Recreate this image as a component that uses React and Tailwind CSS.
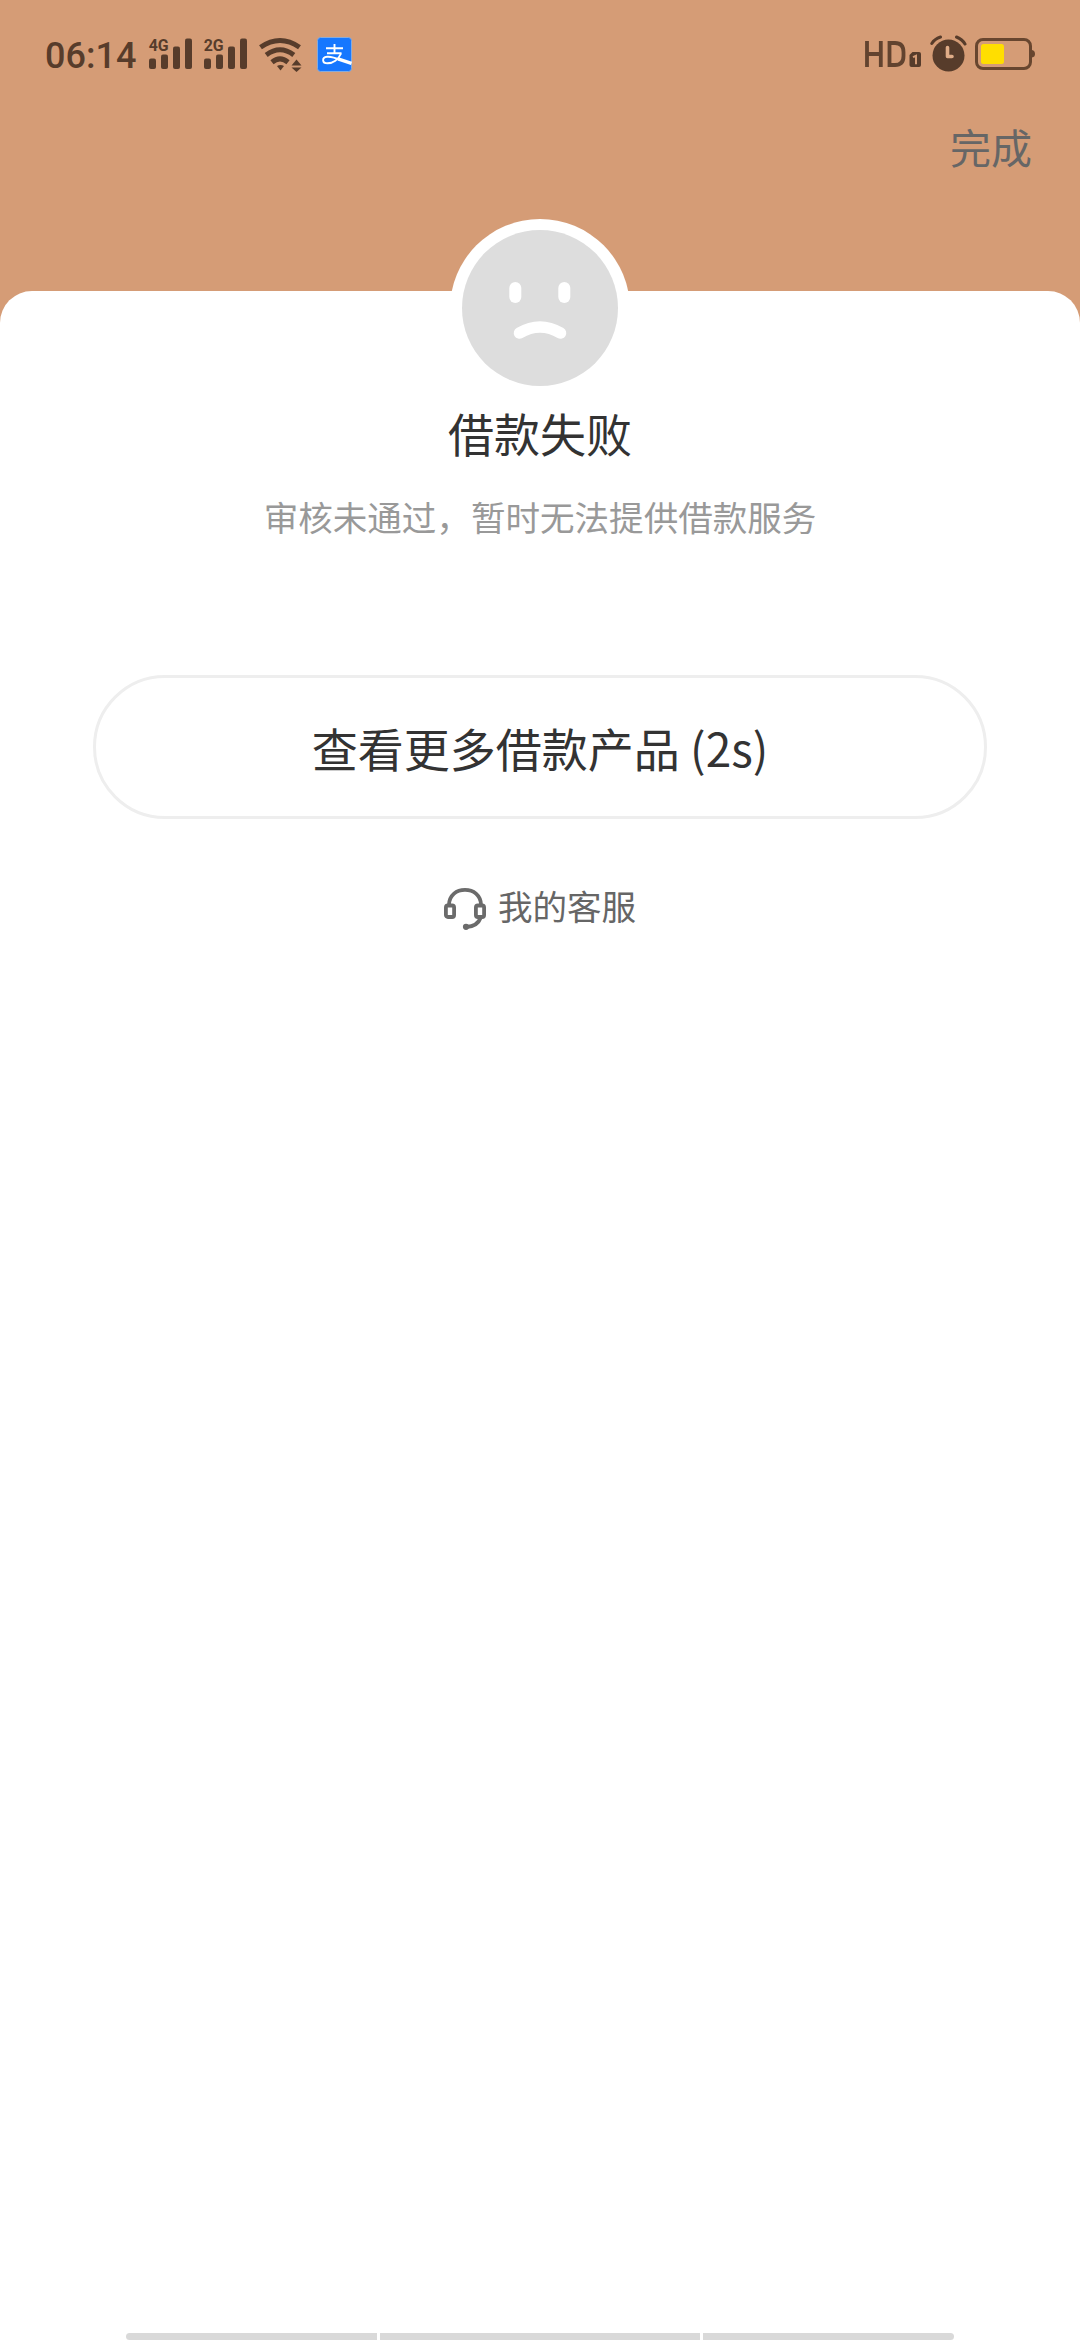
import React, { useState } from 'react';

const SignalIcon = ({ label }) => (
  <svg width="45" height="40" viewBox="-2 -4 45 40" fill="#573c2b">
    <text
      x="-0.3"
      y="12.8"
      fontSize="16.5"
      fontWeight="700"
      textLength="20"
      lengthAdjust="spacingAndGlyphs"
      className="font-['Roboto',sans-serif]"
    >
      {label}
    </text>
    <rect x="0" y="20.5" width="7" height="10.5" rx="2" />
    <rect x="12" y="16.5" width="7" height="14.5" rx="2" />
    <rect x="24" y="8.5" width="7" height="22.5" rx="2" />
    <rect x="36" y="0.5" width="7" height="30.5" rx="2" />
  </svg>
);

const WifiIcon = () => (
  <svg width="43" height="34" viewBox="0 0 43 34" fill="none">
    <g stroke="#573c2b" strokeWidth="5">
      <path d="M1.5 9.3Q21 -4.2 40.5 9.3" />
      <path d="M7.2 17Q21 6.6 34.8 17" />
      <path d="M13 24.2Q21 17.6 29 24.2" />
    </g>
    <g fill="#573c2b">
      <path d="M18 28Q21.5 26 25 28L21.5 32.5Z" />
      <path d="M37.5 21.5L42.5 27.5H32.5Z" />
      <path d="M32.5 29.5H42.5L37.5 34Z" />
    </g>
  </svg>
);

const AlipayIcon = () => (
  <svg width="35" height="35" viewBox="0 0 35 35" fill="none">
    <rect x="0.5" y="0.5" width="34" height="34" rx="3" fill="#1677ff" stroke="#86abdc" />
    <g stroke="#fff">
      <path d="M9 11.3H26M17.5 7V16.5M10 16.3H24.5" strokeWidth="1.9" />
      <path d="M24 16.5C21.5 22.5 16 26.3 10.5 26.3C5 26.3 4.5 20.5 10 19.8C14.5 19.2 20 21.5 24 23.2" strokeWidth="1.9" />
      <path d="M21 21.8L34.5 26.3" strokeWidth="3.4" />
    </g>
  </svg>
);

const HdIcon = () => (
  <svg width="57" height="36" viewBox="0 0 57 36" fill="none">
    <g stroke="#62432f" strokeWidth="3.8">
      <path d="M2 5V31M15.8 5V31M2 18H15.8" />
      <path d="M24.5 7H30Q38.5 7 38.5 16V20Q38.5 29 30 29H24.5Z" />
    </g>
    <path d="M47.5 16H54Q56 16 56 18V29Q56 31 54 31H46.5Q44.5 31 44.5 29V19Z" fill="#573c2b" />
    <path d="M48 21.2L51 19.8V28.2" stroke="#d59c76" strokeWidth="2" />
  </svg>
);

const AlarmIcon = () => (
  <svg width="37" height="38" viewBox="0 0 37 38" fill="none">
    <circle cx="18.5" cy="20.5" r="16" fill="#573c2b" />
    <path d="M1.8 8.5Q4.5 4 10.5 2M26.5 2Q32.5 4.5 35 9" stroke="#573c2b" strokeWidth="3" strokeLinecap="round" />
    <path d="M17.5 12.5V21.5H22" stroke="#e0ad88" strokeWidth="3.6" strokeLinecap="round" strokeLinejoin="round" />
  </svg>
);

const BatteryIcon = () => (
  <svg width="61" height="33" viewBox="0 0 61 33" fill="none">
    <rect x="1.5" y="1.5" width="54" height="29" rx="6.5" stroke="#68462f" strokeWidth="3" />
    <rect x="6" y="6" width="23" height="20" rx="2.5" fill="#ffde00" />
    <path d="M57 12Q60 12.5 60 16Q60 19 57 19.5Z" fill="#68462f" />
  </svg>
);

const SadFace = () => (
  <svg width="180" height="180" viewBox="0 0 180 180" fill="none">
    <circle cx="90" cy="90" r="90" fill="#fff" />
    <circle cx="90" cy="89" r="78" fill="#ddd" />
    <rect x="59.3" y="63" width="12" height="21" rx="6" fill="#fff" />
    <rect x="108.3" y="63" width="12" height="21" rx="6" fill="#fff" />
    <path d="M69.5 114Q90 102 110.5 114" stroke="#fff" strokeWidth="11.5" strokeLinecap="round" />
  </svg>
);

const HeadsetIcon = () => (
  <svg width="42" height="42" viewBox="0 0 42 42" fill="none" stroke="#6b6b6b" strokeWidth="3.8">
    <path d="M5 16.5C5.5 7 12.5 1.9 21 1.9S36.5 7 37 16.5" />
    <rect x="1.9" y="17.5" width="8.2" height="11.5" rx="2" />
    <rect x="31.9" y="17.5" width="8.2" height="11.5" rx="2" />
    <path d="M36.5 30C34.5 35.5 29.5 38.5 22.5 39" />
    <circle cx="22" cy="38.8" r="3.1" fill="#6b6b6b" stroke="none" />
  </svg>
);

const StatusBar = () => (
  <div className="flex h-[108px] items-center justify-between pl-[45px] pr-[44px]">
    <div className="flex items-center">
      <span className="w-[102px] pt-[3px] font-['Roboto',sans-serif] text-[36px] leading-none font-medium text-[#573c2b]">
        06:14
      </span>
      <SignalIcon label="4G" />
      <div className="ml-2.5">
        <SignalIcon label="2G" />
      </div>
      <div className="ml-3 pt-0.5">
        <WifiIcon />
      </div>
      <div className="ml-[15px]">
        <AlipayIcon />
      </div>
    </div>
    <div className="flex items-center">
      <HdIcon />
      <div className="ml-2">
        <AlarmIcon />
      </div>
      <div className="ml-2">
        <BatteryIcon />
      </div>
    </div>
  </div>
);

const App = () => {
  const [seconds] = useState(2);

  return (
    <div className="flex h-[2340px] w-[1080px] flex-col overflow-hidden bg-[#d59c76] font-['Noto_Sans_CJK_SC',sans-serif]">
      <header className="h-[291px] shrink-0">
        <StatusBar />
        <div className="flex justify-end pr-[48px] pt-2">
          <button className="font-['KaiTi','Kaiti_SC','Noto_Sans_CJK_SC',serif] text-[41px] leading-[60px] text-[#666]">
            完成
          </button>
        </div>
      </header>

      <main className="flex flex-1 flex-col items-center rounded-t-[32px] bg-white">
        {/* Face overlaps the header */}
        <div className="-mt-[72px]">
          <SadFace />
        </div>
        <h1 className="mt-px text-[46px] leading-[64px] text-[#333]">借款失败</h1>
        <p className="mt-[27px] text-[34.56px] leading-[50px] text-[#999]">
          审核未通过，暂时无法提供借款服务
        </p>

        <button className="mt-[134px] flex h-[144px] w-[894px] items-center justify-center rounded-full border-[3px] border-[#eee] text-[46px] leading-[64px] text-[#333]">
          查看更多借款产品 ({seconds}s)
        </button>

        <a className="mt-[65px] flex items-center gap-3 text-[34.56px] leading-[50px] text-[#666]">
          <HeadsetIcon />
          <span className="-mt-1 mb-1">我的客服</span>
        </a>

        {/* Navigation gesture hints */}
        <div className="mt-auto flex h-[7px] w-[828px] gap-[3px]">
          <div className="w-[251px] rounded-l-full bg-[#d9d9d9]"></div>
          <div className="flex-1 bg-[#d9d9d9]"></div>
          <div className="w-[251px] rounded-r-full bg-[#d9d9d9]"></div>
        </div>
      </main>
    </div>
  );
};

export default App;
